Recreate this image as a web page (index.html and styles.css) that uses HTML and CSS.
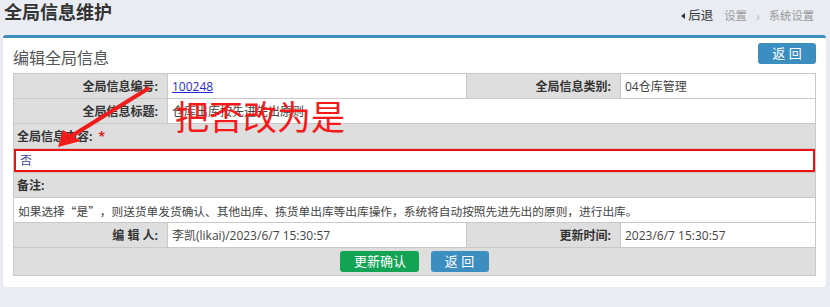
FILE: index.html
```html
<!DOCTYPE html>
<html lang="zh-CN">
<head>
    <meta charset="UTF-8">
    <title>全局信息维护</title>
    <link rel="stylesheet" href="styles.css">
</head>
<body>
    <!-- Cabeçalho da página -->
    <div class="page-header">
        <h1 class="page-title">全局信息维护</h1>
        <div class="crumbs">
            <span class="back-link"><span class="back-arrow"></span>后退</span>
            <span class="crumb">设置</span>
            <span class="crumb-sep">&#8250;</span>
            <span class="crumb">系统设置</span>
        </div>
    </div>

    <div class="panel">
        <div class="panel-head">
            <span class="panel-title">编辑全局信息</span>
            <a class="btn btn-blue">返 回</a>
        </div>

        <table class="form-table">
            <colgroup>
                <col class="col-lbl">
                <col class="col-val1">
                <col class="col-lbl">
                <col>
            </colgroup>
            <tr>
                <td class="lbl">全局信息编号:</td>
                <td class="val"><a class="link">100248</a></td>
                <td class="lbl">全局信息类别:</td>
                <td class="val">04仓库管理</td>
            </tr>
            <tr>
                <td class="lbl">全局信息标题:</td>
                <td class="val" colspan="3">仓库出库按先进先出原则</td>
            </tr>
            <tr>
                <td class="lbl lbl-left" colspan="4">全局信息内容: <span class="req">*</span></td>
            </tr>
            <tr>
                <td class="input-cell" colspan="4"><div class="input-box">否</div></td>
            </tr>
            <tr>
                <td class="lbl lbl-left" colspan="4">备注:</td>
            </tr>
            <tr>
                <td class="val remark" colspan="4">如果选择<span class="q q-open">“</span>是<span class="q q-close">”</span>，则送货单发货确认、其他出库、拣货单出库等出库操作，系统将自动按照先进先出的原则，进行出库。</td>
            </tr>
            <tr>
                <td class="lbl">编 辑 人:</td>
                <td class="val">李凯(likai)/2023/6/7 15:30:57</td>
                <td class="lbl">更新时间:</td>
                <td class="val">2023/6/7 15:30:57</td>
            </tr>
            <tr>
                <td class="actions" colspan="4">
                    <a class="btn btn-green">更新确认</a>
                    <a class="btn btn-blue">返 回</a>
                </td>
            </tr>
        </table>
    </div>

    <!-- Anotação vermelha por cima -->
    <div class="note">把否改为是</div>
    <svg class="note-arrow" width="160" height="70" viewBox="0 0 160 70">
        <line x1="149" y1="3" x2="70" y2="52" stroke="#f01c1c" stroke-width="4"/>
        <polygon points="58,62 63,45 81,56" fill="#f01c1c"/>
    </svg>
</body>
</html>
```

FILE: styles.css
```css
html, body {
    margin: 0;
    padding: 0;
    background: #e9ecf2;
    font-family: "Open Sans", "Noto Sans CJK SC", sans-serif;
    font-size: 12px;
    color: #333;
}

/* Cabeçalho */
.page-header {
    height: 35px;
    display: flex;
    justify-content: space-between;
    align-items: flex-start;
    padding: 0 16px 0 4px;
}

.page-title {
    margin: 0;
    font-size: 18px;
    font-weight: bold;
    line-height: 24px;
    color: #333;
}

.crumbs {
    display: flex;
    align-items: center;
    gap: 9px;
    margin-top: 6px;
    font-size: 11.3px;
    color: #999;
    line-height: 20px;
}

.back-link {
    color: #333;
    display: flex;
    align-items: center;
    font-size: 12.5px;
    margin-right: 2px;
}

.back-arrow {
    width: 0;
    height: 0;
    border-top: 3px solid transparent;
    border-bottom: 3px solid transparent;
    border-right: 4px solid #333;
    margin-right: 3px;
}

.crumb-sep {
    color: #bbb;
    font-size: 13px;
}

/* Painel principal */
.panel {
    margin: 0 4px 0 3px;
    background: #fff;
    border-top: 3px solid #3f8fbf;
    border-radius: 3px;
    padding: 0 10px 11px 10px;
    box-shadow: 0 1px 2px rgba(0, 0, 0, 0.06);
}

.panel-head {
    height: 35px;
    display: flex;
    justify-content: space-between;
    align-items: flex-start;
    padding-top: 5px;
    box-sizing: border-box;
}

.panel-title {
    font-size: 16px;
    color: #555;
    line-height: 24px;
    margin-top: 3px;
}

.btn {
    display: inline-block;
    height: 21px;
    line-height: 21px;
    border-radius: 3px;
    color: #fff;
    font-size: 13px;
    text-align: center;
    cursor: pointer;
}

.btn-blue {
    background: #3d8ec0;
    width: 58px;
}

.btn-green {
    background: #12a355;
    width: 79px;
}

/* Tabela do formulário */
.form-table {
    width: 100%;
    table-layout: fixed;
    border-collapse: collapse;
    border: 1px solid #c9c9c9;
}

.col-lbl {
    width: 154px;
}

.col-val1 {
    width: 299px;
}

.form-table td {
    border: 1px solid #c9c9c9;
    height: 24px;
    padding: 0 4px;
    white-space: nowrap;
    overflow: hidden;
}

.lbl {
    background: #dedede;
    font-weight: bold;
    text-align: right;
    padding-right: 9px !important;
    color: #333;
}

.lbl-left {
    text-align: left;
    padding-left: 3px !important;
}

.val {
    background: #fff;
    color: #444;
}

.remark {
    font-size: 11.7px;
}

/* aspas chinesas em largura cheia */
.q {
    display: inline-block;
    width: 1em;
    font-family: "Noto Sans CJK SC", sans-serif;
}

.q-open {
    text-align: right;
}

.q-close {
    text-align: left;
}

.link {
    color: #2b2bd6;
    text-decoration: underline;
}

.req {
    color: #e02020;
    margin-left: 3px;
}

.input-cell {
    background: #dedede;
    padding: 0 !important;
    height: 23px !important;
}

.input-box {
    height: 19px;
    line-height: 19px;
    border: 2px solid #ee1111;
    background: #fff;
    padding-left: 4px;
    color: #4a4a9a;
}

.actions {
    background: #dedede;
    text-align: center;
    height: 27px !important;
}

.actions .btn {
    margin: 0 4px;
}

/* Anotação */
.note {
    position: absolute;
    left: 175px;
    top: 96px;
    font-family: "Noto Sans CJK SC", sans-serif;
    font-size: 34px;
    line-height: 40px;
    color: #f51a1a;
}

.note-arrow {
    position: absolute;
    left: 0;
    top: 85px;
}
```
